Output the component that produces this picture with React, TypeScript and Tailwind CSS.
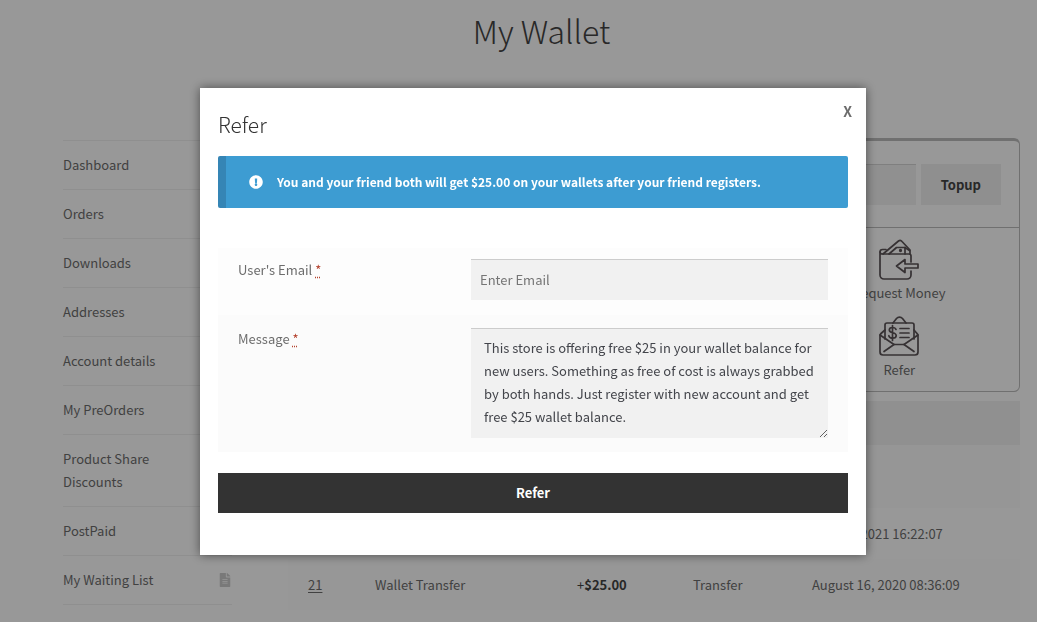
import { useState } from 'react'
import { FaExclamationCircle, FaFileAlt } from 'react-icons/fa'

const NAV_ITEMS = [
  { label: 'Dashboard' },
  { label: 'Orders' },
  { label: 'Downloads' },
  { label: 'Addresses' },
  { label: 'Account details' },
  { label: 'My PreOrders' },
  { label: 'Product Share Discounts' },
  { label: 'PostPaid' },
  { label: 'My Waiting List', icon: <FaFileAlt size={14} className="text-black/20" /> },
]

const TRANSACTIONS = [
  { id: '', reference: '', amount: '', type: '', date: '', row: 'h-[63px] bg-[#fafafa]' },
  { id: '22', reference: 'Wallet Transfer', amount: '$25.00', type: 'Transfer', date: 'May 27, 2021 16:22:07', row: 'h-[51px] bg-[#fdfdfd]' },
  { id: '21', reference: 'Wallet Transfer', amount: '$25.00', type: 'Transfer', date: 'August 16, 2020 08:36:09', row: 'h-[51px] bg-[#fcfcfc]' },
]

const DEFAULT_MESSAGE =
  'This store is offering free $25 in your wallet balance for new users. Something as free of cost is always grabbed by both hands. Just register with new account and get free $25 wallet balance.'

function RequestMoneyIcon() {
  return (
    <svg width="40" height="42" viewBox="0 0 40 42" fill="none" stroke="currentColor" strokeWidth="1.7" strokeLinejoin="round" strokeLinecap="round" className="text-[#5a5356]">
      <path d="M32 23V17a2 2 0 0 0-2-2H3a2 2 0 0 1-2-2v23a4 4 0 0 0 4 4h23a4 4 0 0 0 4-4v-4" />
      <path d="M1 13c0-1.500 1-2.500 2.500-2.500H7" />
      <path d="M4 15L19.500 2a2.500 2.500 0 0 1 3.500.5L31 11v4" />
      <path d="M10 15l7.500-6.500H26V15" />
      <path d="M26 8.500l4.500 3" />
      <circle cx="21.500" cy="11.500" r="0.800" fill="currentColor" />
      <path d="M39 25H26v-4.500L17.500 27l8.500 6.500V29h13z" />
    </svg>
  )
}

function ReferIcon() {
  return (
    <svg width="40" height="40" viewBox="0 0 40 40" fill="none" stroke="currentColor" strokeWidth="1.7" strokeLinejoin="round" strokeLinecap="round" className="text-[#5a5356]">
      <path d="M6 23V9a2 2 0 0 1 2-2h25a2 2 0 0 1 2 2v14" />
      <path d="M14 7l3.500-4.500a4 4 0 0 1 6 0L27 7" />
      <path d="M6 14l-4 3.500a3 3 0 0 0-1 2V36a3 3 0 0 0 3 3h32a3 3 0 0 0 3-3V19.500a3 3 0 0 0-1-2L35 14" />
      <path d="M1 19l14 9.500h10L39 19" />
      <path d="M15 28.500L5 35.500M25 28.500l10 7" />
      <path d="M17 13.500c-.5-1.500-1.500-2-3.500-2-2 0-3.200 1-3.200 2.500 0 3.800 6.900 1.700 6.900 5.500 0 1.600-1.400 2.700-3.600 2.700-2.100 0-3.300-.8-3.800-2.500M13.500 9.500v15" />
      <path d="M21 12.500h9M21 17h9M21 21.500h9" />
    </svg>
  )
}

function Required() {
  return (
    <abbr title="required" className="text-[#b5432f] underline decoration-dotted underline-offset-2">
      *
    </abbr>
  )
}

function Sidebar() {
  return (
    <nav className="w-[169px] shrink-0">
      <ul className="border-t border-black/6">
        {NAV_ITEMS.map((item) => (
          <li key={item.label} className="border-b border-black/6">
            <a href="#" className="flex items-center justify-between pt-3 pb-[13px]">
              <span className="max-w-[120px]">{item.label}</span>
              {item.icon}
            </a>
          </li>
        ))}
      </ul>
    </nav>
  )
}

function WalletPanel() {
  return (
    <section className="rounded-md border border-t-3 border-[#bbb]">
      <form className="flex gap-[5px] border-b border-[#bbb] px-[18px] pt-[23px] pb-[22px]">
        <input
          type="text"
          aria-label="Amount"
          className="h-[41px] min-w-0 flex-1 border-t border-[#d4d4d4] bg-[#f0f0f0] px-[9px]"
        />
        <button type="button" className="h-[41px] bg-[#eee] px-5 font-bold text-[#444]">
          Topup
        </button>
      </form>
      <div className="grid grid-cols-3 gap-y-3 pt-[11px] pb-[10px] pl-3">
        <a href="#" className="col-start-3 flex flex-col items-center">
          <RequestMoneyIcon />
          Request Money
        </a>
        <a href="#" className="col-start-3 flex flex-col items-center gap-0.5">
          <ReferIcon />
          Refer
        </a>
      </div>
    </section>
  )
}

function Transactions() {
  return (
    <table className="mt-[9px] w-full table-fixed text-left">
      <thead>
        <tr className="h-11 bg-[#f0f0f0]">
          <th className="w-[67px]" />
          <th className="w-[202px]" />
          <th className="w-[116px]" />
          <th className="w-[119px]" />
          <th />
        </tr>
      </thead>
      <tbody>
        {TRANSACTIONS.map((t, i) => (
          <tr key={i} className={t.row}>
            <td className="pl-5"><a href="#" className="underline underline-offset-2">{t.id}</a></td>
            <td className="pl-5">{t.reference}</td>
            <td className="pl-5 text-[#444]">
              {t.amount && <>+<b>{t.amount}</b></>}
            </td>
            <td className="pl-5">{t.type}</td>
            <td className="pl-5 whitespace-nowrap">{t.date}</td>
          </tr>
        ))}
      </tbody>
    </table>
  )
}

function ReferModal({ onClose }: { onClose: () => void }) {
  const [email, setEmail] = useState('')
  const [message, setMessage] = useState(DEFAULT_MESSAGE)

  return (
    <div className="fixed inset-0 flex items-start justify-center overflow-hidden bg-black/40 pt-22 pl-[29px]">
      <div
        role="dialog"
        aria-labelledby="refer-title"
        className="relative w-full max-w-[666px] bg-white px-[18px] pt-[21px] pb-[42px] shadow-[0_0_10px_rgba(0,0,0,0.5)]"
      >
        <button type="button" onClick={onClose} aria-label="Close" className="absolute top-3 right-[14px] text-[14px] font-bold">
          X
        </button>

        <h2 id="refer-title" className="mb-[17px] text-[21px] leading-[30px] font-light text-[#333]">Refer</h2>

        {/* Info notice */}
        <div className="flex h-[52px] items-center gap-[14px] rounded-xs border-l-8 border-[#3585b5] bg-[#3d9cd2] pl-[23px] text-[12px] font-bold text-white">
          <FaExclamationCircle size={14} />
          <p className="pb-0.5">You and your friend both will get $25.00 on your wallets after your friend registers.</p>
        </div>

        <form onSubmit={(e) => e.preventDefault()}>
          <div className="mt-10 flex bg-[#fdfdfd] px-5 pt-[11px] pb-[15px]">
            <label htmlFor="email" className="w-[233px] shrink-0 leading-[21px]">
              User's Email <Required />
            </label>
            <input
              id="email"
              type="email"
              placeholder="Enter Email"
              value={email}
              onChange={(e) => setEmail(e.target.value)}
              className="h-[41px] min-w-0 flex-1 border-t border-[#ccc] bg-[#f1f1f1] px-[9px] pb-0.5 text-[#43454b] outline-none placeholder:text-[#757575]"
            />
          </div>
          <div className="mb-[21px] flex bg-[#fbfbfb] px-5 pt-[13px] pb-[14px]">
            <label htmlFor="message" className="w-[233px] shrink-0 leading-[21px]">
              Message <Required />
            </label>
            <textarea
              id="message"
              value={message}
              onChange={(e) => setMessage(e.target.value)}
              className="h-[110px] min-w-0 flex-1 resize overflow-hidden border-t border-[#ccc] bg-[#f1f1f1] px-[13px] pt-[7px] pb-2 text-[#43454b] outline-none"
            />
          </div>
          <button type="submit" className="h-10 w-full bg-[#333] pb-0.5 font-bold text-white">
            Refer
          </button>
        </form>
      </div>
    </div>
  )
}

export default function App() {
  const [open, setOpen] = useState(true)

  return (
    <div className="h-screen overflow-hidden bg-[#fdfdfd] font-['Noto_Sans_CJK_SC',sans-serif] text-[13px] leading-[23px] text-[#6d6d6d]">
      <div className="pr-[17px] pl-[63px]">
        <h1 className="pt-1.5 text-center text-[32px] leading-[48px] font-light text-[#444]">My Wallet</h1>
        <div className="flex items-start gap-14 pt-[84px]">
          <div className="pt-0.5"><Sidebar /></div>
          <main className="min-w-0 flex-1">
            <WalletPanel />
            <Transactions />
          </main>
        </div>
      </div>
      {open && <ReferModal onClose={() => setOpen(false)} />}
    </div>
  )
}
